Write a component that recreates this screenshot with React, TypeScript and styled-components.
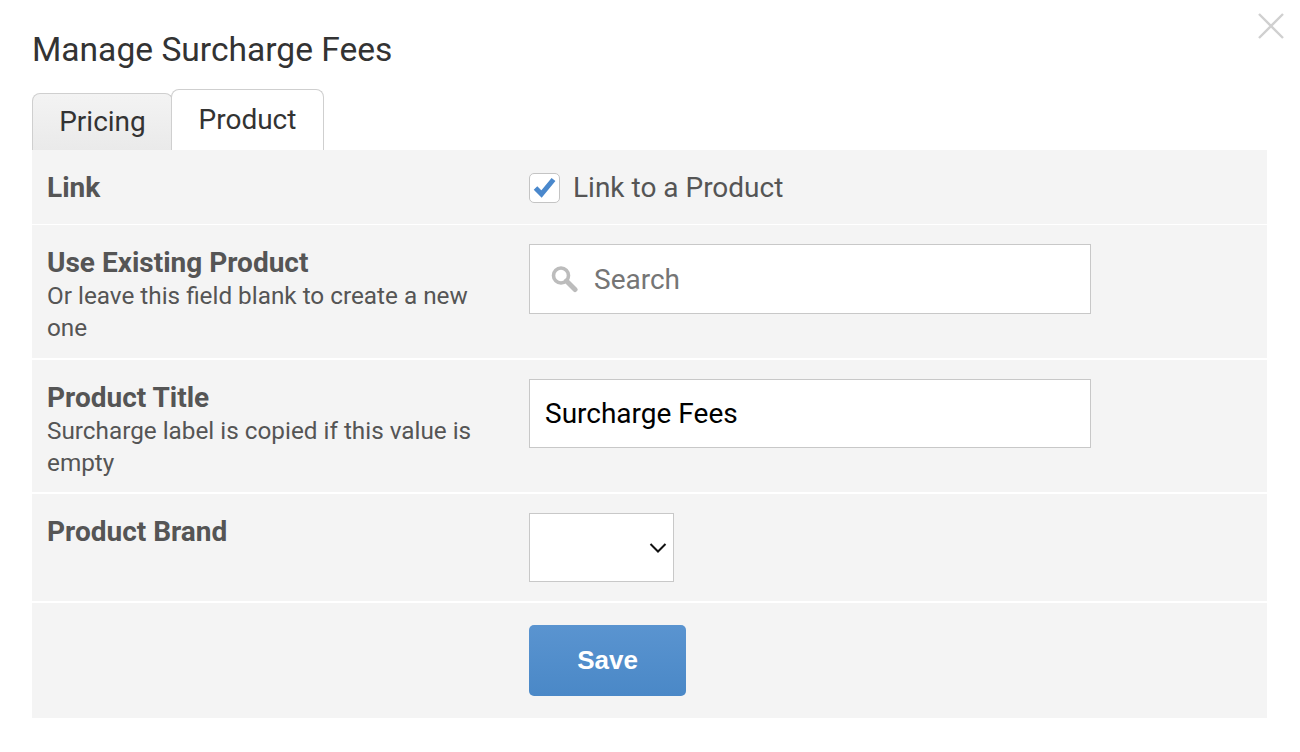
import React from "react";
import styled, { createGlobalStyle } from "styled-components";

const Global = createGlobalStyle`
  html, body { margin: 0; padding: 0; background: #fff; }
  body { font-family: Roboto, "Liberation Sans", sans-serif; color: #4a4a4a; }
  * { box-sizing: border-box; }
`;

const Page = styled.div`
  position: relative;
  width: 1300px;
  height: 752px;
  padding: 29px 33px 0 32px;
  overflow: hidden;
`;

const Title = styled.h1`
  margin: 0;
  height: 41px;
  font-size: 33.6px;
  line-height: 41px;
  font-weight: 400;
  color: #333;
`;

const CloseButton = styled.button`
  position: absolute;
  top: 12px;
  right: 15px;
  width: 28px;
  height: 28px;
  padding: 0;
  border: 0;
  background: none;
  display: block;
`;

const TabBar = styled.div`
  display: flex;
  align-items: flex-end;
  height: 80px;
  padding-top: 19px;
`;

const Tab = styled.div<{ $active?: boolean }>`
  height: ${(p) => (p.$active ? "61px" : "57px")};
  width: ${(p) => (p.$active ? "153px" : "141px")};
  margin-left: ${(p) => (p.$active ? "-2px" : "0")};
  border: 1px solid #cfcfcf;
  border-bottom: 0;
  border-radius: 8px 8px 0 0;
  background: ${(p) => (p.$active ? "#fff" : "linear-gradient(#f3f3f3, #eaeaea)")};
  font-size: 28px;
  line-height: ${(p) => (p.$active ? "60px" : "56px")};
  text-align: center;
  color: #333;
  position: relative;
`;

const Form = styled.div`
  display: flex;
  flex-direction: column;
  width: 1235px;
`;

const Row = styled.div<{ $h: number; $gap?: number }>`
  display: grid;
  grid-template-columns: 497px 1fr;
  height: ${(p) => p.$h}px;
  margin-top: ${(p) => p.$gap ?? 0}px;
  background: #f4f4f4;
`;

const LabelCell = styled.div`
  padding: 20px 0 0 15px;
`;

const Label = styled.div`
  font-size: 28px;
  line-height: 36px;
  font-weight: 700;
  color: #555;
`;

const Hint = styled.div`
  font-size: 24.3px;
  line-height: 31.5px;
  margin-top: -1px;
  width: 440px;
  color: #555;
`;

const FieldCell = styled.div<{ $top: number }>`
  padding-top: ${(p) => p.$top}px;
  display: flex;
  align-items: flex-start;
`;

const CheckRow = styled.div`
  display: flex;
  align-items: center;
  gap: 13px;
  font-size: 28px;
  line-height: 32px;
  color: #555;
`;

const CheckBox = styled.span`
  width: 31px;
  height: 30px;
  border: 1px solid #c4c4c4;
  border-radius: 5px;
  background: #fff;
  display: flex;
  align-items: center;
  justify-content: center;
`;

const InputBox = styled.div<{ $h: number }>`
  width: 562px;
  height: ${(p) => p.$h}px;
  background: #fff;
  border: 1px solid #c8c8c8;
  display: flex;
  align-items: center;
  font-size: 28px;
`;

const SearchIcon = styled.svg`
  margin-left: 20px;
  width: 28px;
  height: 28px;
  flex: none;
`;

const Placeholder = styled.span`
  margin-left: 16px;
  color: #757575;
`;

const Value = styled.span`
  margin-left: 15px;
  color: #000;
`;

const SelectBox = styled.div`
  width: 145px;
  height: 69px;
  background: #fff;
  border: 1px solid #c8c8c8;
  display: flex;
  align-items: center;
  justify-content: flex-end;
  padding-right: 6px;
`;

const SaveButton = styled.button`
  width: 157px;
  height: 71px;
  border: 0;
  border-radius: 5px;
  background: linear-gradient(#5a94d0, #4a88c7);
  color: #fff;
  font-family: "Liberation Sans", Arial, sans-serif;
  font-size: 26px;
  font-weight: 700;
  padding: 0;
`;

export default function App() {
  return (
    <Page>
      <Global />
      <CloseButton aria-label="Close">
        <svg width="28" height="28" viewBox="0 0 28 28">
          <path d="M2 2 L26 26 M26 2 L2 26" stroke="#d0d0d0" strokeWidth="2.4" fill="none" />
        </svg>
      </CloseButton>
      <Title>Manage Surcharge Fees</Title>
      <TabBar>
        <Tab>Pricing</Tab>
        <Tab $active>Product</Tab>
      </TabBar>
      <Form>
        <Row $h={74}>
          <LabelCell><Label>Link</Label></LabelCell>
          <FieldCell $top={22}>
            <CheckRow>
              <CheckBox>
                <svg width="23" height="22" viewBox="0 0 23 22">
                  <path d="M2.5 11 L8.5 17 L20.5 2.5" stroke="#4a88cc" strokeWidth="5" fill="none" />
                </svg>
              </CheckBox>
              Link to a Product
            </CheckRow>
          </FieldCell>
        </Row>
        <Row $h={133} $gap={1}>
          <LabelCell>
            <Label>Use Existing Product</Label>
            <Hint>Or leave this field blank to create a new one</Hint>
          </LabelCell>
          <FieldCell $top={19}>
            <InputBox $h={70}>
              <SearchIcon viewBox="0 0 28 28">
                <circle cx="11" cy="10.5" r="7.5" stroke="#bcbcbc" strokeWidth="3.6" fill="none" />
                <path d="M16.5 16 L25 24.5" stroke="#bcbcbc" strokeWidth="5" strokeLinecap="round" />
              </SearchIcon>
              <Placeholder>Search</Placeholder>
            </InputBox>
          </FieldCell>
        </Row>
        <Row $h={132} $gap={2}>
          <LabelCell>
            <Label>Product Title</Label>
            <Hint>Surcharge label is copied if this value is empty</Hint>
          </LabelCell>
          <FieldCell $top={19}>
            <InputBox $h={69}><Value>Surcharge Fees</Value></InputBox>
          </FieldCell>
        </Row>
        <Row $h={107} $gap={2}>
          <LabelCell><Label>Product Brand</Label></LabelCell>
          <FieldCell $top={19}>
            <SelectBox>
              <svg width="18" height="12" viewBox="0 0 18 12">
                <path d="M1.5 2 L9 9.5 L16.5 2" stroke="#111" strokeWidth="2" fill="none" />
              </svg>
            </SelectBox>
          </FieldCell>
        </Row>
        <Row $h={115} $gap={2}>
          <div />
          <FieldCell $top={22}>
            <SaveButton>Save</SaveButton>
          </FieldCell>
        </Row>
      </Form>
    </Page>
  );
}
